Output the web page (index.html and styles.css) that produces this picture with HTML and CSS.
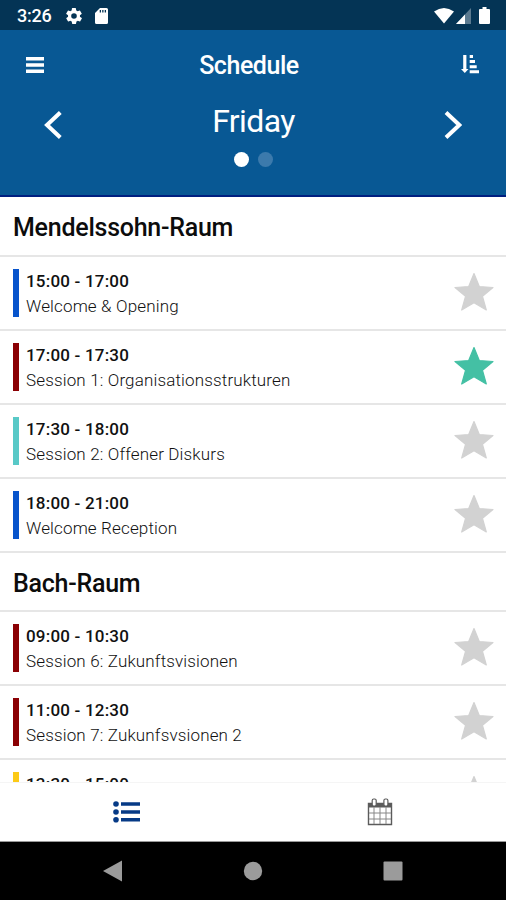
FILE: index.html
```html
<!DOCTYPE html>
<html lang="en">
<head>
<meta charset="utf-8">
<title>Schedule</title>
<link rel="stylesheet" href="styles.css">
</head>
<body>
<svg class="defs" aria-hidden="true">
  <symbol id="star" viewBox="0 0 40 40"><path d="M20 1.500 25.300 14.500 39 15.500 28.500 24.300 32.300 38 20 30.700 7.700 38 11.500 24.300 1 15.500 14.700 14.500Z"/></symbol>
</svg>
<div class="screen">
  <div class="statusbar">
    <span class="clock">3:26</span>
    <svg class="gear" viewBox="2 2 20 20"><path d="M19.4 13a7.5 7.5 0 0 0 0-2l2.1-1.6a.5.5 0 0 0 .1-.6l-2-3.5a.5.5 0 0 0-.6-.2l-2.5 1a7.300 7.300 0 0 0-1.700-1l-.4-2.600a.5.5 0 0 0-.5-.4h-4a.5.5 0 0 0-.5.4L9.100 5.100a7.700 7.700 0 0 0-1.700 1l-2.500-1a.5.5 0 0 0-.6.2l-2 3.500a.5.5 0 0 0 .1.600L4.600 11a8 8 0 0 0 0 2l-2.100 1.600a.5.5 0 0 0-.1.600l2 3.500c.1.200.4.300.6.200l2.500-1a7.300 7.300 0 0 0 1.700 1l.4 2.600c0 .3.200.5.500.5h4c.3 0 .5-.2.500-.5l.4-2.600a7.700 7.700 0 0 0 1.700-1l2.500 1c.2.100.5 0 .6-.2l2-3.500a.5.5 0 0 0-.1-.6ZM12 15.500a3.500 3.500 0 1 1 0-7 3.500 3.500 0 0 1 0 7Z"/></svg>
    <svg class="card" viewBox="0 0 13 16"><path fill-rule="evenodd" d="M5 0H11.500Q13 0 13 1.500V14.500Q13 16 11.500 16H1.500Q0 16 0 14.500V5ZM4.700 2V4.500H6V2ZM7.200 2V4.500H8.500V2ZM9.700 2V4.500H11V2Z"/></svg>
    <span class="spacer"></span>
    <svg class="wifi" viewBox="0 0 20 16"><path d="M0 3.500Q10-3.500 20 3.500L10 15.500Z"/></svg>
    <svg class="signal" viewBox="0 0 15 16"><path class="faint" d="M15 0V16H0Z"/><path d="M9 6.400V16H0Z"/></svg>
    <svg class="battery" viewBox="0 0 11 17"><path d="M3.500 0H7.500V2H10Q11 2 11 3V16Q11 17 10 17H1Q0 17 0 16V3Q0 2 1 2H3.500Z"/></svg>
  </div>
  <header class="header">
    <div class="toolbar">
      <svg class="menu" viewBox="0 0 18 16"><path d="M0 0H18V3.500H0ZM0 6.200H18V9.700H0ZM0 12.400H18V15.900H0Z"/></svg>
      <h1 class="title">Schedule</h1>
      <svg class="sort" viewBox="0 0 18 19"><path d="M2.200 0H5.400V14H7.500L3.800 18 0 14H2.200ZM8.700 0H12V3H8.700ZM8.700 5H14V8H8.700ZM8.700 10.200H15.700V13.200H8.700ZM8.700 15.200H18V18.200H8.700Z"/></svg>
    </div>
    <div class="day">
      <svg class="chev" viewBox="0 0 18 28"><path d="M16.300 1.500 3 14 16.300 26.500"/></svg>
      <div class="day-center">
        <div class="day-name">Friday</div>
        <div class="dots"><i class="dot on"></i><i class="dot"></i></div>
      </div>
      <svg class="chev" viewBox="0 0 18 28"><path d="M2 1.500 15.300 14 2 26.500"/></svg>
    </div>
  </header>
  <main class="list">
    <h2 class="room">Mendelssohn-Raum</h2>
    <div class="row"><i class="bar blue"></i><div class="info"><div class="time">15:00 - 17:00</div><div class="name">Welcome &amp; Opening</div></div><svg class="star"><use href="#star"/></svg></div>
    <div class="row"><i class="bar red"></i><div class="info"><div class="time">17:00 - 17:30</div><div class="name">Session 1: Organisationsstrukturen</div></div><svg class="star active"><use href="#star"/></svg></div>
    <div class="row"><i class="bar teal"></i><div class="info"><div class="time">17:30 - 18:00</div><div class="name">Session 2: Offener Diskurs</div></div><svg class="star"><use href="#star"/></svg></div>
    <div class="row"><i class="bar blue"></i><div class="info"><div class="time">18:00 - 21:00</div><div class="name">Welcome Reception</div></div><svg class="star"><use href="#star"/></svg></div>
    <h2 class="room second">Bach-Raum</h2>
    <div class="row"><i class="bar red"></i><div class="info"><div class="time">09:00 - 10:30</div><div class="name">Session 6: Zukunftsvisionen</div></div><svg class="star"><use href="#star"/></svg></div>
    <div class="row"><i class="bar red"></i><div class="info"><div class="time">11:00 - 12:30</div><div class="name">Session 7: Zukunfsvsionen 2</div></div><svg class="star"><use href="#star"/></svg></div>
    <div class="row"><i class="bar yellow"></i><div class="info"><div class="time">13:30 - 15:00</div></div><svg class="star"><use href="#star"/></svg></div>
  </main>
  <nav class="tabs">
    <div class="tab"><svg class="list-icon" viewBox="0 0 27 22"><circle cx="3" cy="3" r="2.800"/><circle cx="3" cy="11" r="2.800"/><circle cx="3" cy="18.700" r="2.800"/><path d="M8 1.200H27V4.800H8ZM8 9.200H27V12.800H8ZM8 16.900H27V20.500H8Z"/></svg></div>
    <div class="tab"><svg class="cal" viewBox="0 0 26 28"><path class="fill" d="M1 5H25V9.500H1Z"/><path class="frame" d="M1.500 5.500H24.500V26.500H1.500Z"/><path class="grid-lines" d="M7 9V26M13 9V26M19 9V26M2 15H24M2 21H24"/><rect class="ring" x="5.200" y="1" width="4" height="7" rx="1.500"/><rect class="ring" x="16.900" y="1" width="4" height="7" rx="1.500"/></svg></div>
  </nav>
  <div class="navbar">
    <svg viewBox="0 0 20 22"><path d="M0 11 19 .5V21.500Z"/></svg>
    <svg viewBox="0 0 20 22"><circle cx="10" cy="11" r="9.200"/></svg>
    <svg viewBox="0 0 20 22"><rect x=".5" y="1.500" width="19" height="19" rx="1"/></svg>
  </div>
</div>
</body>
</html>
```
FILE: styles.css
```css
* { box-sizing: border-box; }
body { margin: 0; font-family: Roboto, sans-serif; color: #111; background: #fff; }
h1, h2 { margin: 0; font-weight: 500; }
svg { display: block; flex: none; }
.defs { display: none; }
.screen { width: 506px; height: 900px; display: flex; flex-direction: column; overflow: hidden; }

.statusbar { height: 30px; flex: none; background: #043455; display: flex; align-items: center; padding: 1px 16px 0 17px; fill: #fff; color: #fff; }
.clock { font-size: 18px; font-weight: 500; line-height: 30px; width: 49px; letter-spacing: -0.2px; }
.gear { width: 16px; height: 16px; }
.card { width: 13px; height: 16px; margin-left: 13px; }
.spacer { flex: 1; }
.wifi { width: 20px; height: 16px; }
.signal { width: 15px; height: 16px; margin: 0 8px 0 2px; }
.faint { opacity: .35; }
.battery { width: 11px; height: 17px; }

.header { height: 167px; flex: none; background: #085894; color: #fff; border-bottom: 2px solid #001f80; }
.toolbar { height: 70px; display: flex; align-items: center; justify-content: space-between; padding: 0 27px 0 26px; fill: #fff; }
.menu { width: 18px; height: 16px; }
.sort { width: 18px; height: 19px; margin-top: -1px; }
.title { font-size: 25px; line-height: 30px; letter-spacing: -0.45px; margin: 2px 7px 0 0; }
.day { display: flex; justify-content: space-between; padding: 0 44px; }
.chev { width: 18px; height: 28px; margin-top: 11px; fill: none; stroke: #fff; stroke-width: 4; }
.day-center { padding-left: 1px; }
.day-name { font-size: 32px; line-height: 38px; text-align: center; margin-top: 2px; letter-spacing: -0.6px; }
.dots { display: flex; justify-content: center; gap: 9px; margin-top: 12px; }
.dot { width: 15px; height: 15px; border-radius: 50%; background: #3c7aac; }
.dot.on { background: #fff; }

.list { flex: 1; min-height: 0; overflow: hidden; }
.room { height: 60px; padding: 0 13px; border-bottom: 2px solid #e6e6e6; font-size: 25px; line-height: 61px; letter-spacing: -0.25px; color: #0c0c0c; }
.room.second { height: 59px; line-height: 61px; }
.row { height: 74px; display: flex; padding: 12px 11px 0 13px; border-bottom: 2px solid #e6e6e6; }
.bar { width: 6px; height: 48px; flex: none; }
.blue { background: #0754cc; }
.red { background: #8b0004; }
.teal { background: #58c9c7; }
.yellow { background: #fcca17; }
.info { flex: 1; padding-left: 7px; }
.time { font-size: 17px; line-height: 24px; font-weight: 500; letter-spacing: .2px; }
.name { font-size: 17px; line-height: 24px; margin-top: 1px; font-weight: 300; letter-spacing: .15px; color: #111; white-space: nowrap; }
.star { width: 40px; height: 40px; margin: 3px 1px 0 0; fill: #d2d2d2; stroke: #d2d2d2; stroke-width: 1.2; stroke-linejoin: round; }
.star.active { fill: #44c0a4; stroke: #44c0a4; }

.tabs { height: 60px; flex: none; display: flex; border-top: 1px solid #f5f5f5; border-bottom: 1px solid #999; background: #fff; }
.tab { flex: 1; display: flex; align-items: center; justify-content: center; }
.list-icon { width: 27px; height: 22px; fill: #063a86; }
.cal { width: 26px; height: 28px; }
.cal .fill { fill: #5b5b5b; }
.frame { fill: none; stroke: #5b5b5b; stroke-width: 1.4; }
.grid-lines { fill: none; stroke: #888; stroke-width: 1; }
.ring { fill: #fff; stroke: #5b5b5b; stroke-width: 1.2; }
.navbar { height: 58px; flex: none; background: #000; display: flex; justify-content: space-between; align-items: center; padding: 0 103px; }
.navbar svg { width: 20px; height: 22px; fill: #9b9b9b; }
```
